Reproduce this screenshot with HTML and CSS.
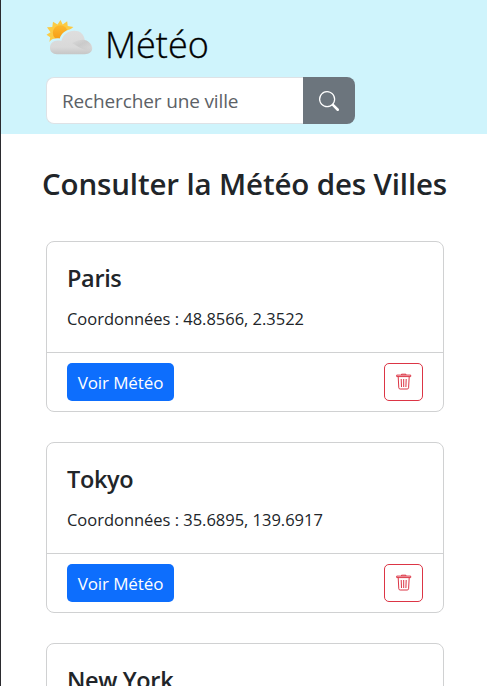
FILE: index.html
```html
<!DOCTYPE html>
<html lang="fr">
<head>
<meta charset="utf-8">
<title>Météo</title>
<link rel="stylesheet" href="styles.css">
</head>
<body>
<svg class="defs" width="0" height="0" aria-hidden="true">
  <symbol id="trash" viewBox="0 0 16 17">
    <path d="M.7 3.600h14v-1.500h-14zM5.500 2V1.200h4.400V2M2.200 3.800l.6 11q.1 1.200 1.400 1.200h7q1.300 0 1.400-1.200l.6-11M5.200 6l.3 8M7.700 6v8M10.200 6l-.3 8" fill="none" stroke="currentColor" stroke-width="1"/>
  </symbol>
</svg>
<header class="header">
  <div class="brand">
    <svg class="logo" viewBox="0 0 48 36" aria-hidden="true">
      <defs>
        <linearGradient id="sun" x1="0" y1="0" x2="0" y2="1"><stop offset="0" stop-color="#fdb92e"/><stop offset="1" stop-color="#f59a12"/></linearGradient>
        <linearGradient id="cloud" x1="0" y1="0" x2="0" y2="1"><stop offset="0" stop-color="#dedede"/><stop offset=".7" stop-color="#d9d9d9"/><stop offset="1" stop-color="#c6c6c6"/></linearGradient>
        <linearGradient id="shade" x1="0" y1="0" x2="1" y2="1"><stop offset="0" stop-color="#bdbdbd" stop-opacity="0"/><stop offset=".45" stop-color="#bdbdbd" stop-opacity=".55"/><stop offset="1" stop-color="#bdbdbd" stop-opacity="0"/></linearGradient>
      </defs>
      <path d="M14.500 0l2.200 4.500 4.500-3.300.5 4.900 5.700.9-4.800 3.800L8 20 3.400 22l.8-4.700-3.700-2.600 4-2.500L1 7.300l5.300-.4L7 1.700l4.500 2.700z" fill="#fbcb45"/>
      <circle cx="14.300" cy="12.800" r="7.500" fill="url(#sun)"/>
      <path d="M11 34.500C6 34.500 3.300 31.500 3.300 27.300c0-4.500 3-7.800 7.600-7.800 1-.2 2.300-.3 3.800.1 1.500-5.500 7-9.500 13.600-9.500 6 0 10 3.300 11.300 9 4 1.500 6.700 4.700 6.700 8.600 0 4.300-3 6.800-7.500 6.800z" transform="translate(-1 -1)" fill="#cff4fc"/>
      <path d="M11 34.200C6.500 34.200 4 31.500 4 27.800c0-4.300 3.300-7.300 7.800-7.200 1.400-.1 2.200 0 3.500.4C17 14.500 22 10.800 28.300 10.800c6 0 9.500 3.300 10.500 9.200 4.400 1.400 7.400 4.300 7.400 8 0 4-3 6.200-7.500 6.200z" fill="url(#cloud)"/>
      <path d="M26 23q8-4 12.800-3c4.400 1.400 6.800 4.500 6.400 8.500-3 4-9 1-19.200-5.500z" fill="url(#shade)"/>
    </svg>
    <h1 class="title">Météo</h1>
  </div>
  <form class="search">
    <input class="field" type="text" placeholder="Rechercher une ville" aria-label="Ville">
    <button class="search-btn" type="button" aria-label="Rechercher">
      <svg viewBox="0 0 16 16" width="20" height="20" fill="#fff"><path d="M11.742 10.344a6.500 6.500 0 1 0-1.397 1.398h-.001q.044.060.098.115l3.850 3.850a1 1 0 0 0 1.415-1.414l-3.850-3.850a1 1 0 0 0-.115-.1zM12 6.500a5.500 5.500 0 1 1-11 0 5.500 5.500 0 0 1 11 0"/></svg>
    </button>
  </form>
</header>
<main class="main">
  <h2 class="heading">Consulter la Météo des Villes</h2>
  <article class="card">
    <div class="card-body"><h3 class="city">Paris</h3><p class="coords">Coordonnées : 48.8566, 2.3522</p></div>
    <div class="card-footer"><button class="view"><span>Voir Météo</span></button><button class="delete" aria-label="Supprimer"><svg class="bin"><use href="#trash"/></svg></button></div>
  </article>
  <article class="card">
    <div class="card-body"><h3 class="city">Tokyo</h3><p class="coords">Coordonnées : 35.6895, 139.6917</p></div>
    <div class="card-footer"><button class="view"><span>Voir Météo</span></button><button class="delete" aria-label="Supprimer"><svg class="bin"><use href="#trash"/></svg></button></div>
  </article>
  <article class="card">
    <div class="card-body"><h3 class="city">New York</h3></div>
  </article>
</main>
</body>
</html>
```
FILE: styles.css
```css
* { box-sizing: border-box; margin: 0; }
html, body { height: 686px; overflow: hidden; }
body {
  background: #fff;
  border-left: 1px solid #2b2b2f;
  color: #212529;
  font-family: "Open Sans", "Noto Sans", sans-serif;
}
.defs { display: block; height: 0; }
button, input { font: inherit; }
.header { height: 134px; padding: 19px 0 0 45px; background: #cff4fc; }
.brand { display: flex; height: 58px; }
.logo { width: 48px; height: 36px; margin-top: 1px; }
.title {
  margin-left: 11px;
  color: #000;
  font-size: 36px;
  font-weight: 300;
  line-height: 52px;
  -webkit-text-stroke: 0.35px #000;
  white-space: nowrap;
}
.search { display: flex; width: 309px; height: 47px; }
.field {
  width: 257px;
  padding: 0 0 0 15px;
  border: 1px solid #dee2e6;
  border-right: 0;
  border-radius: 8px 0 0 8px;
  background: #fff;
  font-size: 19px;
}
.field::placeholder { color: #5c6166; opacity: 1; letter-spacing: -0.14px; }
.search-btn {
  display: flex;
  align-items: center;
  justify-content: center;
  width: 52px;
  padding: 0 1px 0 0;
  border: 0;
  border-radius: 0 8px 8px 0;
  background: #6c757d;
}
.main { padding: 30px 43px 0 45px; }
.heading {
  height: 77px;
  margin: 0 -4px;
  font-size: 29.5px;
  font-weight: 600;
  line-height: 40px;
  letter-spacing: -0.14px;
  white-space: nowrap;
}
.card { height: 171px; margin-bottom: 30px; border: 1px solid #d0d1d2; border-radius: 8px; }
.card-body { height: 110px; padding: 20px; }
.city { font-size: 23.5px; font-weight: 600; line-height: 33px; letter-spacing: -0.35px; }
.coords { margin-top: 11px; font-size: 16.5px; line-height: 26px; letter-spacing: -0.02px; white-space: nowrap; }
.card-footer {
  display: flex;
  justify-content: space-between;
  padding: 10px 20px;
  border-top: 1px solid #d0d1d2;
}
.view, .delete {
  display: flex;
  align-items: center;
  justify-content: center;
  height: 38px;
  padding: 0;
  border-radius: 5px;
}
.view { width: 107px; border: 0; background: #0d6efd; color: #fff; font-size: 17px; letter-spacing: -0.1px; white-space: nowrap; }
.delete { width: 39px; border: 1px solid #dc3545; background: #fff; color: #dc3545; }
.bin { width: 16px; height: 17px; margin-top: -2px; }
```
